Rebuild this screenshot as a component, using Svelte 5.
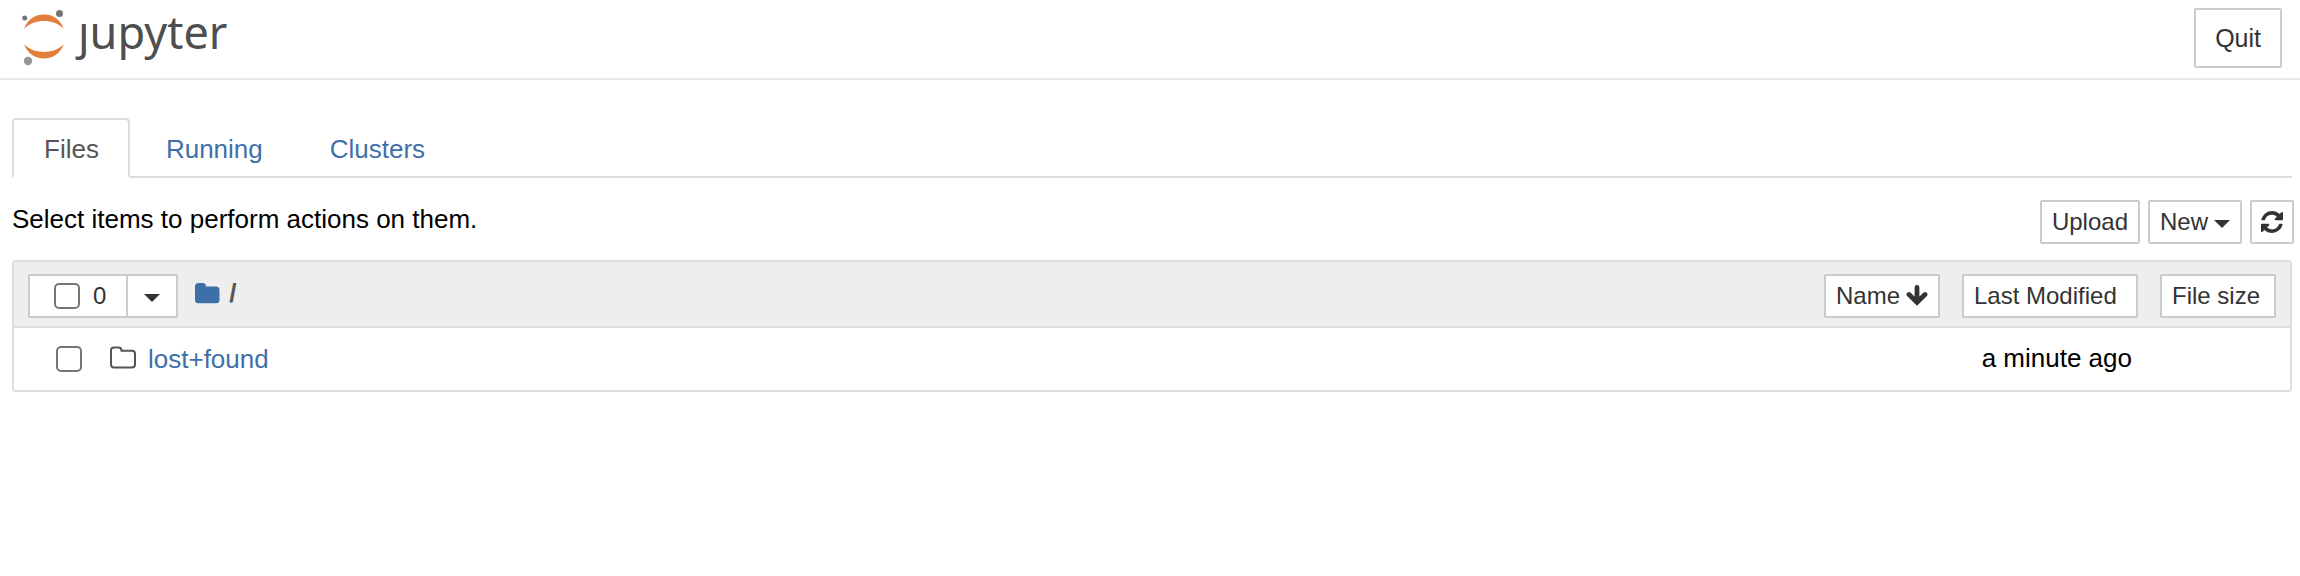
<script>
  let tab = $state('Files');
  const tabs = ['Files', 'Running', 'Clusters'];
  const items = [{ name: 'lost+found', modified: 'a minute ago', size: '' }];
</script>

<header>
  <a class="logo" href="#home" aria-label="Jupyter home">
    <svg width="44" height="60" viewBox="0 4 44 60" aria-hidden="true">
      <g fill="#e47e3c">
        <path d="M2 24.800C6 15 13 10.600 22 10.600S38 15 41.700 24.800C36 19 29 17 22 17S8 19 2 24.800Z" />
        <path d="M2 40.300C6 50 13 54.400 22 54.400S38 50 41.700 40.300C36 46 29 48 22 48S8 46 2 40.300Z" />
      </g>
      <circle cx="37.500" cy="9.500" r="3.500" fill="#767677" />
      <circle cx="2.700" cy="14" r="2.500" fill="#767677" />
      <circle cx="6" cy="57" r="4.200" fill="#989798" />
    </svg>
    <span>ȷupyter</span>
  </a>
  <button class="btn quit">Quit</button>
</header>

<main>
  <nav>
    {#each tabs as t}
      <a href="#{t.toLowerCase()}" class:active={tab === t} onclick={() => (tab = t)}>{t}</a>
    {/each}
  </nav>

  <div class="toolbar">
    <p>Select items to perform actions on them.</p>
    <div class="actions">
      <button class="btn">Upload</button>
      <button class="btn">New <i class="caret"></i></button>
      <button class="btn square" aria-label="Refresh">
        <svg width="22" height="22" viewBox="0 0 1536 1536" fill="currentColor" aria-hidden="true">
          <path d="M1511 928q0 5-1 7-64 268-268 434.500T764 1536q-146 0-282.500-55T238 1324l-129 129q-19 19-45 19t-45-19-19-45V960q0-26 19-45t45-19h448q26 0 45 19t19 45-19 45l-137 137q71 66 161 102t187 36q134 0 250-65t186-179q11-17 53-117 8-23 30-23h192q13 0 22.500 9.500t9.500 22.500zm25-800v448q0 26-19 45t-45 19h-448q-26 0-45-19t-19-45 19-45l138-138Q969 256 768 256q-134 0-250 65T332 500q-11 17-53 117-8 23-30 23H50q-13 0-22.500-9.500T18 608v-7q65-268 270-434.500T768 0q146 0 284 55.500T1297 212l130-129q19-19 45-19t45 19 19 45z" />
        </svg>
      </button>
    </div>
  </div>

  <div class="panel">
    <table>
      <thead>
        <tr>
          <th class="path">
            <div class="line">
              <div class="group">
                <label><input type="checkbox" aria-label="Select all" /><span>0</span></label>
                <button aria-label="Choose selection"><i class="caret"></i></button>
              </div>
              <a class="crumb" href="#root" aria-label="Root folder">
                <svg width="26" height="22" viewBox="0 0 26 22" aria-hidden="true">
                  <path fill="#3f6fa9" d="M1 4.500Q1 1 4.500 1H8.500Q12 1 12 4.500H22Q25.500 4.500 25.500 8V18Q25.500 21.300 22 21.300H4.500Q1 21.300 1 18Z" />
                </svg>
              </a>
              <span class="slash">/</span>
            </div>
          </th>
          <th class="name"><button class="btn">Name
            <svg width="22" height="22" viewBox="0 0 22 22" aria-hidden="true">
              <path d="M11 2.500V17M3 9.500L11 17.300L19 9.500" fill="none" stroke="currentColor" stroke-width="4.800" stroke-linecap="round" stroke-linejoin="miter" />
            </svg></button></th>
          <th class="modified"><button class="btn">Last Modified</button></th>
          <th class="size"><button class="btn">File size</button></th>
        </tr>
      </thead>
      <tbody>
        {#each items as item}
          <tr>
            <td colspan="2">
              <div class="item">
                <input type="checkbox" aria-label="Select {item.name}" />
                <svg width="26" height="24" viewBox="0 0 26 24" aria-hidden="true">
                  <path d="M1 4.500Q1 1.500 4 1.500H8.500Q11.500 1.500 11.500 4.800H22Q25 4.800 25 8V18.500Q25 21.500 22 21.500H4Q1 21.500 1 18.500Z" fill="none" stroke="#555" stroke-width="2" />
                </svg>
                <a href="#{item.name}">{item.name}</a>
              </div>
            </td>
            <td class="when">{item.modified}</td>
            <td>{item.size}</td>
          </tr>
        {/each}
      </tbody>
    </table>
  </div>
</main>

<style>
  :global(body) {
    background: #fff;
    color: #000;
    font: 26px/36px "Helvetica Neue", "Liberation Sans", Arial, sans-serif;
  }
  header {
    display: flex;
    align-items: center;
    justify-content: space-between;
    padding: 8px 18px 10px 22px;
    border-bottom: 2px solid #e7e7e7;
  }
  .logo {
    display: flex;
    align-items: center;
    gap: 12px;
    height: 60px;
    color: #4e4e4e;
    text-decoration: none;
  }
  .logo span {
    padding-bottom: 12px;
    font: 45px/60px "Noto Sans", sans-serif;
  }
  .btn {
    display: inline-flex;
    align-items: center;
    justify-content: center;
    gap: 6px;
    box-sizing: border-box;
    height: 44px;
    padding: 0 10px;
    border: 2px solid #ccc;
    border-radius: 2px;
    background: #fff;
    color: #333;
    font: 24px/36px "Helvetica Neue", "Liberation Sans", Arial, sans-serif;
    white-space: nowrap;
  }
  .quit {
    height: 60px;
    padding: 0 19px;
    font-size: 25px;
  }
  .square {
    width: 44px;
    padding: 0;
  }
  .caret {
    margin-top: 4px;
    border: 8px solid transparent;
    border-top-color: #333;
    border-bottom: 0;
  }
  main {
    padding: 38px 8px 0 12px;
  }
  nav {
    display: flex;
    gap: 4px;
    border-bottom: 2px solid #ddd;
  }
  nav a {
    padding: 11px 29px 9px 30px;
    margin-bottom: -2px;
    border: 2px solid transparent;
    border-radius: 4px 4px 0 0;
    color: #3f6fa9;
    text-decoration: none;
  }
  nav a.active {
    border-color: #ddd #ddd #fff;
    color: #555;
  }
  .toolbar {
    display: flex;
    justify-content: space-between;
    padding-top: 22px;
  }
  p {
    margin: 0;
    padding-top: 1px;
  }
  .actions {
    display: flex;
    gap: 8px;
    margin-right: -2px;
  }
  .panel {
    margin-top: 16px;
    border: 2px solid #ddd;
    border-radius: 4px;
  }
  table {
    width: 100%;
    border-spacing: 0;
  }
  th {
    padding: 12px 0 8px;
    background: #eee;
    border-bottom: 2px solid #ddd;
    font-weight: 400;
    text-align: right;
  }
  th .btn {
    display: flex;
    margin-left: auto;
  }
  .path {
    width: 100%;
    padding-left: 14px;
  }
  .modified,
  .size {
    padding-left: 22px;
  }
  .modified .btn {
    width: 176px;
    justify-content: flex-start;
  }
  .size {
    padding-right: 14px;
  }
  .size .btn {
    width: 116px;
    justify-content: flex-start;
  }
  .line,
  .group,
  label,
  .item {
    display: flex;
    align-items: center;
  }
  .group {
    box-sizing: border-box;
    height: 44px;
    border: 2px solid #ccc;
    border-radius: 2px;
    background: #fff;
    color: #333;
    font-size: 24px;
  }
  label {
    gap: 13px;
    padding: 0 20px 0 24px;
  }
  .group button {
    display: grid;
    place-items: center;
    width: 50px;
    height: 40px;
    padding: 0;
    border: 0;
    border-left: 2px solid #ccc;
    background: #fff;
  }
  input {
    appearance: none;
    box-sizing: border-box;
    width: 26px;
    height: 26px;
    margin: 0;
    border: 2px solid #767676;
    border-radius: 5px;
    background: #fff;
  }
  input:checked {
    background: #3f6fa9;
  }
  .crumb {
    display: flex;
    margin-left: 16px;
    padding-bottom: 6px;
  }
  .slash {
    margin-left: 9px;
    padding-bottom: 6px;
    color: #555;
    font-weight: 700;
  }
  td {
    height: 62px;
    padding: 0;
  }
  .item {
    padding-left: 42px;
  }
  .item svg {
    margin-left: 28px;
    padding-bottom: 2px;
  }
  .item a {
    margin-left: 12px;
    color: #3f6fa9;
    text-decoration: none;
  }
  .when {
    padding: 0 6px 2px 0;
    text-align: right;
    box-sizing: border-box;
    white-space: nowrap;
  }
</style>
